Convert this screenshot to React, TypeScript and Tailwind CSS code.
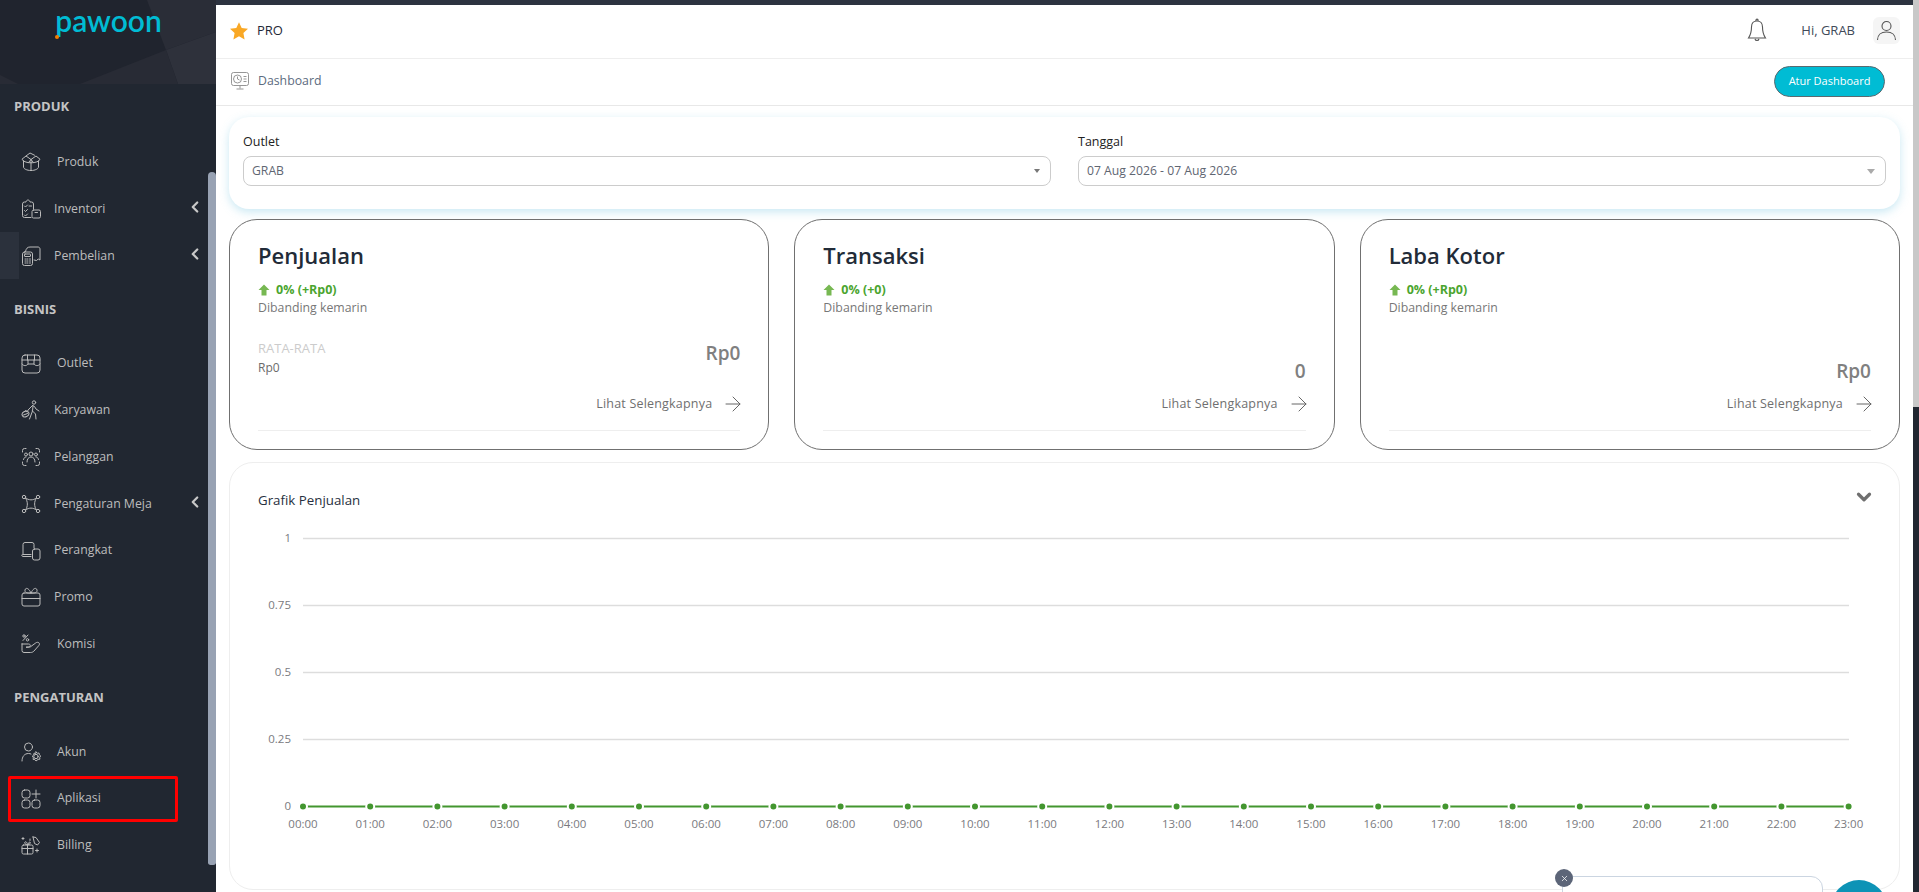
import { ArrowRight, ChevronDown, ChevronLeft, X } from "lucide-react";
import type { ReactNode } from "react";

const icons: Record<string, ReactNode> = {
  produk: (
    <>
      <path d="M2.5 9v6c0 1.8 3.4 3.5 7.5 3.5s7.500-1.700 7.500-3.500V9" />
      <path d="M2.500 9 1 7.200 5 4l5 3.500L15 4l4 3.200L17.500 9c-2 1.300-5 1.800-7.500 1.800S4.500 10.300 2.500 9Z" />
      <path d="M5 4 9 1l4.500 2.200M10 7.500v11M8 10l2-2.500 2 2.500" />
    </>
  ),
  inventori: (
    <>
      <path d="M10 18.500H3.500a2 2 0 0 1-2-2V5a2 2 0 0 1 2-2H5c.3-1.200 1-2 2-2s1.700.8 2 2h1.500a2 2 0 0 1 2 2v5" />
      <path d="m3.500 7 1 1 2-2M8 7h2.500M3.500 11.500l1 1 2-2M3.500 16l1 1 2-2" />
      <rect x="11" y="11" width="8.500" height="8" rx="1.500" />
      <path d="M14 13.500h2.500" />
    </>
  ),
  pembelian: (
    <>
      <rect x="1.500" y="6" width="10" height="13.500" rx="2" />
      <rect x="3.500" y="8" width="6" height="2.500" rx=".5" />
      <path d="M4 13h1M6 13h1M8.500 13h1M4 15h1M6 15h1M8.500 15h1M4 17h1M6 17h1M8.500 17h1" />
      <path d="M4.500 5.500C5 2.500 6.500 1 9 1h8c1.200 0 2 1 2 2v11l-1.800-1-1.700 1.500-2.500-.5" />
    </>
  ),
  outlet: (
    <>
      <rect x="1" y="1" width="18" height="18" rx="3" />
      <path d="M1 6h18M6.500 1v5M13.500 1v5M1 10c1.500 2.200 4.500 2.200 6 0h6c1.500 2.200 4.500 2.200 6 0M7 10V6M13 10V6" />
    </>
  ),
  karyawan: (
    <>
      <circle cx="13" cy="2.500" r="1.700" />
      <path d="M11.500 5.500 8 9l-1.500 2M11.500 5.500l2 1 1.500 2.500 3 2M12 6l-.5 5-3 8M11.500 11l3 3 .5 5" />
      <ellipse cx="4.500" cy="14" rx="3.500" ry="2.800" transform="rotate(-25 4.500 14)" />
      <path d="m3 12 2-1.500 1 1.500M2.500 15l4-1.500" />
    </>
  ),
  pelanggan: (
    <>
      <path d="M5 1.500H3.500a2 2 0 0 0-2 2V5M15 1.500h1.500a2 2 0 0 1 2 2V5M5 18.500H3.500a2 2 0 0 1-2-2V15M15 18.500h1.500a2 2 0 0 0 2-2V15" />
      <circle cx="10" cy="7" r="2" />
      <circle cx="5" cy="7.500" r="1.500" />
      <circle cx="15" cy="7.500" r="1.500" />
      <path d="M6 15c0-3 1.500-5 4-5s4 2 4 5M2.500 12.500c.3-1.500 1.200-2.500 2.500-2.500M17.500 12.500c-.3-1.500-1.200-2.500-2.500-2.500" />
    </>
  ),
  meja: (
    <>
      <circle cx="3" cy="3" r="1.700" />
      <circle cx="17" cy="3" r="1.700" />
      <circle cx="3" cy="17" r="1.700" />
      <circle cx="17" cy="17" r="1.700" />
      <path d="M4.500 4c3.500 2.500 7.500 2.500 11 0-2.500 3.500-2.500 8.500 0 12-3.500-2.500-7.500-2.500-11 0 2.500-3.500 2.500-8.500 0-12Z" />
    </>
  ),
  perangkat: (
    <>
      <path d="M2 13V3.500A2 2 0 0 1 4 1.500h7a2 2 0 0 1 2 2V7" />
      <path d="M10 13.500H1.500c-.5 0-.7.300-.7.800s.3 1.200 1 1.200H10" />
      <rect x="11.500" y="8" width="7.500" height="11" rx="2" />
    </>
  ),
  promo: (
    <>
      <rect x="1" y="6" width="18" height="13" rx="2" />
      <path d="M1 11.500h18M10 6C6 6.500 3.500 5.500 4 3s3.500-2.500 6 3c2.500-5.500 5.500-5.500 6-3s-2 3.500-6 3Z" />
    </>
  ),
  komisi: (
    <>
      <path d="M7 1 2 6.500" />
      <circle cx="3" cy="2" r="1.200" />
      <circle cx="6.500" cy="5.800" r="1.200" />
      <path d="M1 10h6.500c1 0 1.800.6 1.800 1.500s-.8 1.700-1.800 1.700H5l4.300-.3 5.500-4c1.100-.8 2.400-.8 3.200 0s.5 1.800-.3 2.800l-4.700 5.300c-1 1-2 1.500-3.500 1.500H3a2 2 0 0 1-2-2V10Z" />
    </>
  ),
  akun: (
    <>
      <circle cx="7.500" cy="5" r="4" />
      <path d="M1 19c0-4.500 2.500-7.500 6.500-7.500 1 0 2 .2 2.500.5" />
      <circle cx="15" cy="14.500" r="2.200" />
      <path d="m15 10 1.200 1.200 1.800-.2.300 1.700 1.400 1.200-1 1.500.2 1.800-1.800.2L15 19l-1.100-1.400-1.800-.2.200-1.800-1-1.500 1.400-1.200.3-1.700 1.800.2L15 10Z" />
    </>
  ),
  aplikasi: (
    <>
      <rect x="1" y="1" width="8" height="8" rx="2.500" />
      <rect x="1" y="11" width="8" height="8" rx="2.500" />
      <rect x="11" y="11" width="8" height="8" rx="2.500" />
      <path d="M15 1v8M11 5h8" />
    </>
  ),
  billing: (
    <>
      <rect x="1" y="10" width="11" height="9" rx="1.500" />
      <path d="M1 13.500h11M6.500 10v9M6.500 10C4 9.500 3 8 4 7s2.500 1 2.500 3 1.500-4 2.500-3 0 2.500-2.500 3" />
      <path d="m12 2 3 .5 3.500 5-2 2.500-3-1.500L12 2ZM2 2.500v2M1 3.500h2M9 4v1.500M16 14v3M14.500 15.500h3" />
    </>
  ),
};

const sections = [
  {
    title: "PRODUK",
    items: [
      { key: "produk", label: "Produk", wide: true },
      { key: "inventori", label: "Inventori", arrow: true },
      { key: "pembelian", label: "Pembelian", arrow: true },
    ],
  },
  {
    title: "BISNIS",
    items: [
      { key: "outlet", label: "Outlet", wide: true },
      { key: "karyawan", label: "Karyawan" },
      { key: "pelanggan", label: "Pelanggan" },
      { key: "meja", label: "Pengaturan Meja", arrow: true },
      { key: "perangkat", label: "Perangkat" },
      { key: "promo", label: "Promo" },
      { key: "komisi", label: "Komisi", wide: true },
    ],
  },
  {
    title: "PENGATURAN",
    items: [
      { key: "akun", label: "Akun", wide: true },
      { key: "aplikasi", label: "Aplikasi", wide: true },
      { key: "billing", label: "Billing", wide: true },
    ],
  },
];

const stats = [
  { title: "Penjualan", delta: "0% (+Rp0)", value: "Rp0", average: true },
  { title: "Transaksi", delta: "0% (+0)", value: "0" },
  { title: "Laba Kotor", delta: "0% (+Rp0)", value: "Rp0" },
];

const gridLines = [
  { label: "1", y: 18 },
  { label: "0.75", y: 85 },
  { label: "0.5", y: 152 },
  { label: "0.25", y: 219 },
];
const hours = Array.from({ length: 24 }, (_, i) => ({
  label: `${String(i).padStart(2, "0")}:00`,
  x: 73 + i * 67.2,
}));

function Sidebar() {
  return (
    <aside className="relative w-[216px] h-full shrink-0 overflow-hidden bg-[#212731]">
      <div className="relative h-[84px] bg-[#20242e]">
        <svg className="absolute inset-0" width="216" height="84" viewBox="0 0 216 84">
          <path d="M147 0H216V32L166 50Z" fill="#2a2d37" />
          <path d="M166 50 216 32V84H178Z" fill="#2e313b" />
          <path d="M166 50 178 84H80Z" fill="#282b35" />
          <path d="M0 75 18 84H0Z" fill="#282b35" />
        </svg>
        <div className="relative flex justify-center pl-[1px] pt-[2px] text-[30px] leading-[36px] font-semibold text-[#00bcd4] font-['Lato',sans-serif]">
          pawoon
        </div>
        <div className="absolute left-[55px] top-[35px] size-[4px] rounded-full bg-[#f57c00]" />
      </div>
      {sections.map((section, i) => (
        <section key={section.title} className={i > 0 ? "mt-[7px]" : ""}>
          <h3 className={`flex h-[46px] items-center pl-[14px] text-[13px] font-bold text-[#c4c4c4] ${i === 0 ? "mb-[9px]" : "mb-2"}`}>
            {section.title}
          </h3>
          {section.items.map((item) => (
            <div key={item.key} className="flex h-[46.75px] items-center pl-[21px] pr-[12px] text-[12.300px] text-[#bdbdbd]">
              <svg
                className="size-5 shrink-0"
                viewBox="0 0 20 20"
                fill="none"
                stroke="#bbbbbb"
                strokeWidth="1"
                strokeLinecap="round"
                strokeLinejoin="round"
              >
                {icons[item.key]}
              </svg>
              <span className={item.wide ? "ml-4" : "ml-[13px]"}>{item.label}</span>
              {item.arrow && <ChevronLeft className="ml-auto mb-1 text-[#c8c8c8]" size={18} strokeWidth={3} />}
            </div>
          ))}
        </section>
      ))}
      <div className="absolute left-0 top-[232px] h-[47px] w-[19px] bg-[#2b313c]" />
      <div className="absolute right-0 top-[172px] h-[693px] w-2 rounded-t-md rounded-b-sm bg-[#98a2b3]" />
    </aside>
  );
}

function Select({ value, caret }: { value: string; caret: string }) {
  return (
    <div className="mt-[5px] flex h-[30px] items-center justify-between rounded-lg border border-[#cccccc] pl-[8px] pr-[10px] text-[12.200px] text-[#5f6672]">
      <span>{value}</span>
      <span className={caret} />
    </div>
  );
}

function StatCard({ title, delta, value, average }: (typeof stats)[number]) {
  return (
    <div className="h-[231px] rounded-[28px] border border-[#707070] px-[28px] pt-[20px]">
      <h2 className="text-[22px] leading-[30px] font-semibold text-[#222b38]">{title}</h2>
      <div className="mt-[11px] flex h-[18px] items-center gap-[6px] text-[12.500px] font-bold text-[#4ba52f]">
        <svg width="12" height="12" viewBox="0 0 12 12" fill="#77b852">
          <path d="M6 0.500 11.500 6H8.500V11.500H3.500V6H0.500Z" />
        </svg>
        {delta}
      </div>
      <p className="h-[17px] text-[12.300px] leading-[17px] text-[#777777]">Dibanding kemarin</p>
      <div className="flex h-[68px] items-end justify-between">
        {average ? (
          <div className="pb-[7px] text-[12px] leading-[19px]">
            <div className="text-[13px] text-[#cccccc]">RATA-RATA</div>
            <div className="text-[#6b6b6b]">Rp0</div>
          </div>
        ) : (
          <div />
        )}
        <div className={`text-[19px] leading-[26px] font-semibold text-[#808080] ${average ? "pb-[18px]" : ""}`}>{value}</div>
      </div>
      <div className="mt-[11px] flex h-[18px] items-center justify-end gap-[9px] text-[12.500px] tracking-[0.2px] text-[#6f6f6f]">
        Lihat Selengkapnya
        <ArrowRight size={24} strokeWidth={1} className="-mr-[5px] text-[#666666]" />
      </div>
      <div className="mt-[17px] border-t border-[#eeeeee]" />
    </div>
  );
}

function SalesChart() {
  return (
    <svg className="mt-[8px] block font-['Open_Sans',sans-serif]" width="1669" height="320" viewBox="0 0 1669 320">
      {gridLines.map((line) => (
        <g key={line.label}>
          <line x1="73" x2="1619" y1={line.y - 0.5} y2={line.y - 0.5} stroke="#dddddd" strokeWidth="1.500" />
          <text x="61" y={line.y + 3} textAnchor="end" fontSize="11.500" fontWeight="500" fill="#7a7a80">
            {line.label}
          </text>
        </g>
      ))}
      <text x="61" y="289" textAnchor="end" fontSize="11.500" fontWeight="500" fill="#7a7a80">
        0
      </text>
      <line x1="73" x2="1619" y1="285.500" y2="285.500" stroke="#43962f" strokeWidth="2" />
      {hours.map((hour) => (
        <g key={hour.label}>
          <circle cx={hour.x} cy="285.500" r="4" fill="#43962f" stroke="#ffffff" strokeWidth="2" />
          <text x={hour.x} y="307" textAnchor="middle" fontSize="11.500" fontWeight="500" fill="#7a7a80">
            {hour.label}
          </text>
        </g>
      ))}
    </svg>
  );
}

export default function App() {
  return (
    <div className="relative flex h-[892px] w-full overflow-hidden bg-[#212731] font-['Open_Sans',sans-serif]">
      <Sidebar />
      <main className="h-full w-[1697px] shrink-0 overflow-hidden bg-white">
        <div className="h-[5px] bg-[#2d3340]" />
        <header className="flex h-[54px] items-center border-b border-[#eeeeee] pb-[2px] pl-[13px] pr-[13px]">
          <svg width="20" height="20" viewBox="0 0 20 20" fill="#f9a825">
            <path d="M10 1.200 12.700 7l6.300.8-4.600 4.300 1.200 6.300L10 15.300l-5.600 3.100 1.200-6.300L1 7.800 7.300 7Z" />
          </svg>
          <span className="ml-[8px] text-[13px] font-medium text-[#1f2937]">PRO</span>
          <svg className="ml-auto mb-[2px]" width="22" height="26" viewBox="0 0 22 26" fill="none" stroke="#555555" strokeWidth="1.100">
            <path d="M11 4c-3.500 0-5.500 2.500-5.500 6 0 5.500-1 8-3 11h17c-2-3-3-5.500-3-11 0-3.500-2-6-5.500-6ZM9.800 4c0-2.500 2.400-2.500 2.400 0M9 22c.5 2 3.500 2 4 0" />
          </svg>
          <span className="ml-[33px] text-[13px] text-[#414a59]">Hi, GRAB</span>
          <div className="ml-[18px] flex size-[27px] items-center justify-center rounded-md bg-[#f5f5f5]">
            <svg width="23" height="23" viewBox="0 0 23 23" fill="none" stroke="#555555" strokeWidth="1.100">
              <circle cx="11.500" cy="7" r="4.500" />
              <path d="M2.500 21c0-5 3.500-8 9-8s9 3 9 8" />
            </svg>
          </div>
        </header>
        <div className="flex h-[47px] items-center border-b border-[#e8e8e8] pb-[2px] pl-[15px] pr-[28px]">
          <svg width="18" height="18" viewBox="0 0 18 18" fill="none" stroke="#8a8a8a" strokeWidth="0.900">
            <rect x="0.500" y="0.500" width="17" height="13" rx="2" />
            <circle cx="6.500" cy="7" r="4" />
            <path d="M6.500 4.500V7l2 1M12.500 4.500h3M12.500 7h3M12.500 9.500h3M9 14v2.500M5.500 17h7" />
          </svg>
          <span className="ml-[9px] text-[12.300px] text-[#5c6b80]">Dashboard</span>
          <button className="ml-auto h-[31px] w-[111px] rounded-full border border-[#5a6a70] bg-[#00bcd4] text-[11px] text-white">
            Atur Dashboard
          </button>
        </div>
        <div className="px-[13px] pt-[11px]">
          <div className="grid h-[92px] grid-cols-2 gap-[27px] rounded-[20px] px-[14px] pt-[16px] shadow-[0_3px_10px_rgba(100,190,220,0.35)]">
            <div>
              <label className="block text-[12.500px] leading-[18px] text-[#222222]">Outlet</label>
              <Select value="GRAB" caret="border-x-[3px] border-t-[4px] border-x-transparent border-t-[#777777]" />
            </div>
            <div>
              <label className="block text-[12.500px] leading-[18px] text-[#222222]">Tanggal</label>
              <Select value="07 Aug 2026 - 07 Aug 2026" caret="border-x-[4px] border-t-[5px] border-x-transparent border-t-[#aaaaaa]" />
            </div>
          </div>
          <div className="mt-[10px] grid grid-cols-3 gap-[25px]">
            {stats.map((stat) => (
              <StatCard key={stat.title} {...stat} />
            ))}
          </div>
          <div className="mt-[12px] h-[428px] rounded-[24px] border border-[#eeeeee]">
            <div className="flex h-[50px] items-end justify-between pl-[28px] pr-[24px]">
              <h3 className="pb-[4px] text-[13.300px] font-medium leading-[18px] text-[#273040]">Grafik Penjualan</h3>
              <ChevronDown className="mb-[5px] text-[#6f6f6f]" size={22} strokeWidth={3.500} />
            </div>
            <SalesChart />
          </div>
        </div>
      </main>
      <div className="h-[407px] w-[6px] bg-[#c8c8c8]" />

      <div className="absolute left-[1562px] top-[876px] h-[40px] w-[261px] rounded-tr-xl border border-[#cbd5e1] bg-white" />
      <div className="absolute left-[1555px] top-[869px] flex size-[18px] items-center justify-center rounded-full bg-[#5c6578]">
        <X className="text-white" size={9} strokeWidth={2} />
      </div>
      <div className="absolute left-[1831px] top-[880px] size-[56px] rounded-full bg-[#0d93b6]" />
      <div className="absolute left-[8px] top-[776px] h-[46px] w-[170px] rounded-[2px] border-[3px] border-[#ff0000]" />
    </div>
  );
}
